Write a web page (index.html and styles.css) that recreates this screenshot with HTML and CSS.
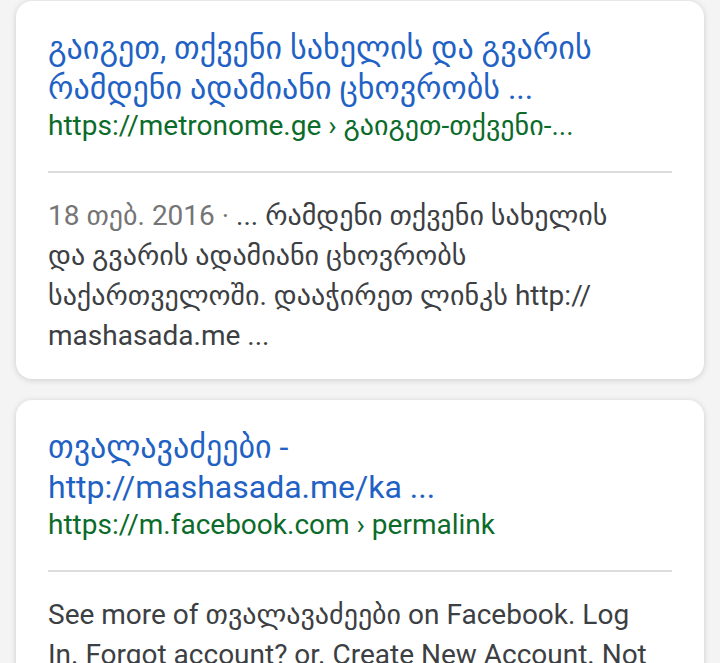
FILE: index.html
```html
<!DOCTYPE html>
<html lang="ka">
<head>
  <meta charset="UTF-8">
  <title>ძიების შედეგები</title>
  <link rel="stylesheet" href="styles.css">
</head>
<body>

<div class="results">
  <div class="card">
    <a class="title" href="#">გაიგეთ, თქვენი სახელის და გვარის<br>რამდენი ადამიანი ცხოვრობს ...</a>
    <div class="url">https://metronome.ge › გაიგეთ-თქვენი-...</div>
    <hr class="divider">
    <div class="snippet">
      <span class="date">18 თებ. 2016 · </span>... რამდენი თქვენი სახელის<br>და გვარის ადამიანი ცხოვრობს<br>საქართველოში. დააჭირეთ ლინკს http://<br>mashasada.me ...
    </div>
  </div>

  <div class="card">
    <a class="title" href="#">თვალავაძეები -<br>http://mashasada.me/ka ...</a>
    <div class="url">https://m.facebook.com › permalink</div>
    <hr class="divider">
    <div class="snippet">
      See more of თვალავაძეები on Facebook. Log<br>In. Forgot account? or. Create New Account. Not<br>now. Related Pages.
    </div>
  </div>
</div>

</body>
</html>
```

FILE: styles.css
```css
html, body {
  margin: 0;
  padding: 0;
  height: 100%;
  overflow: hidden;
  background: #f4f4f4;
  font-family: Roboto, "DejaVu Sans", sans-serif;
}

.results {
  display: flex;
  flex-direction: column;
  gap: 21px;
  padding: 1px 16px 0 16px;
}

.card {
  background: #ffffff;
  border-radius: 16px;
  box-shadow: 0 1px 6px rgba(0, 0, 0, 0.16);
  padding: 27px 32px 23px 32px;
}

.title {
  display: block;
  font-size: 32px;
  line-height: 40px;
  color: #1f62c4;
  text-decoration: none;
  white-space: nowrap;
}

.url {
  font-size: 28px;
  line-height: 36px;
  color: #0b6b2a;
  white-space: nowrap;
}

.divider {
  border: none;
  border-top: 2px solid #dcdcdc;
  margin: 27px 0 23px 0;
}

.snippet {
  font-size: 28px;
  line-height: 40px;
  color: #3c4043;
  white-space: nowrap;
}

.date {
  color: #757575;
}
```
